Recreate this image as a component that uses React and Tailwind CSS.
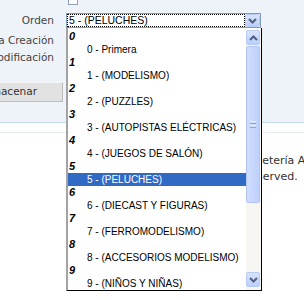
const groups = [
  '0 - Primera',
  '1 - (MODELISMO)',
  '2 - (PUZZLES)',
  '3 - (AUTOPISTAS ELÉCTRICAS)',
  '4 - (JUEGOS DE SALÓN)',
  '5 - (PELUCHES)',
  '6 - (DIECAST Y FIGURAS)',
  '7 - (FERROMODELISMO)',
  '8 - (ACCESORIOS MODELISMO)',
  '9 - (NIÑOS Y NIÑAS)'
]

const Chevron = ({ up }) => (
  <svg width="9" height="6" viewBox="0 0 9 6" className="block">
    <polyline
      points={up ? '1,5 4.5,1.5 8,5' : '1,1 4.5,4.5 8,1'}
      fill="none"
      stroke="#4d6185"
      strokeWidth="2"
    />
  </svg>
)

const ScrollButton = ({ up }) => (
  <div className="h-[15px] w-[14px] rounded-[2px] border border-[#b7c9f5] bg-gradient-to-b from-[#d9e4fd] to-[#bccffa] flex items-center justify-center">
    <Chevron up={up} />
  </div>
)

const Row = ({ label }) => (
  <div className="flex items-center h-[17px]">
    <div className="w-[55px] pr-[1px] flex justify-end overflow-hidden whitespace-nowrap text-[10.5px] text-[#444]">
      {label}
    </div>
  </div>
)

export default function App() {
  return (
    <div className="w-[304px] h-[300px] overflow-hidden bg-white relative" style={{ fontFamily: '"DejaVu Sans", Verdana, sans-serif' }}>
      {/* form area */}
      <div className="bg-[#eef3f9] h-[123px] border-b border-[#c6d8ec] flex flex-col">
        <div className="ml-[68px] w-[10px] h-[5px] border-x border-b border-[#8f9fb5] bg-white" />

        <div className="flex items-center h-[15px] mt-[8px]">
          <div className="w-[55px] pr-[1px] flex justify-end whitespace-nowrap text-[10.5px] text-[#444]">Orden</div>
          <div className="ml-[11px] relative w-[195px] h-[15px] border border-[#7f9db9] bg-white flex">
            <div className="flex-1 border border-dotted border-black flex items-center pl-[1px] text-[10.5px] text-black leading-none" style={{ fontFamily: '"Liberation Sans", Arial, sans-serif' }}>
              5 - (PELUCHES)
            </div>
            <div className="w-[15px] h-[13px] rounded-[2px] border border-[#b7c9f5] bg-gradient-to-b from-[#d9e4fd] to-[#bccffa] flex items-center justify-center">
              <Chevron />
            </div>

            {/* open list */}
            <div className="absolute left-[-1px] top-[14px] z-10 w-[196px] h-[263px] bg-white border-l-2 border-l-[#a3a3a3] border-r border-b border-black pt-[2px] flex">
              <div className="flex-1 flex flex-col" style={{ fontFamily: '"Liberation Sans", Arial, sans-serif' }}>
                {groups.map((g, i) => (
                  <div key={i} className="flex flex-col">
                    <div className="h-[13px] pl-[1px] flex items-center text-[11px] font-bold italic text-black leading-none">{i}</div>
                    <div className={`h-[13px] pl-[19px] flex items-center text-[10px] leading-none ${i === 5 ? 'bg-[#316ac5] text-white' : 'text-black'}`}>
                      {g}
                    </div>
                  </div>
                ))}
              </div>
              <div className="w-[15px] h-[260px] bg-[#f7f6f2] flex flex-col">
                <ScrollButton up />
                <div className="mt-[1px] h-[157px] w-[14px] rounded-[2px] border border-[#b3c6f3] bg-gradient-to-r from-[#cfdcfd] to-[#bed0fb] flex items-center justify-center">
                  <div className="flex flex-col gap-[1px]">
                    <div className="w-[6px] h-px bg-[#eef3ff]" />
                    <div className="w-[6px] h-px bg-[#8ca6e0]" />
                    <div className="w-[6px] h-px bg-[#eef3ff]" />
                    <div className="w-[6px] h-px bg-[#8ca6e0]" />
                  </div>
                </div>
                <div className="flex-1" />
                <ScrollButton />
                <div className="h-[3px]" />
              </div>
            </div>
          </div>
        </div>

        <div className="mt-[4px]">
          <Row label="Fecha Creación" />
          <Row label="Fecha Modificación" />
        </div>

        <div className="mt-[16px] w-[63px] h-[20px] bg-[#e2e2e2] border-t border-t-[#f4f4f4] border-r border-b border-[#bdbdbd] flex items-center justify-end pr-[25px] overflow-hidden whitespace-nowrap text-[10.5px] text-[#333]">
          Almacenar
        </div>
      </div>

      <div className="h-[10px] border-b border-[#e6ecf3]" />

      {/* footer */}
      <div className="mt-[20px] text-[11px] leading-[16px] text-[#333] whitespace-nowrap">
        <div className="pl-[238px]">Juguetería Amiga</div>
        <div className="pl-[246px]">reserved.</div>
      </div>
    </div>
  )
}
